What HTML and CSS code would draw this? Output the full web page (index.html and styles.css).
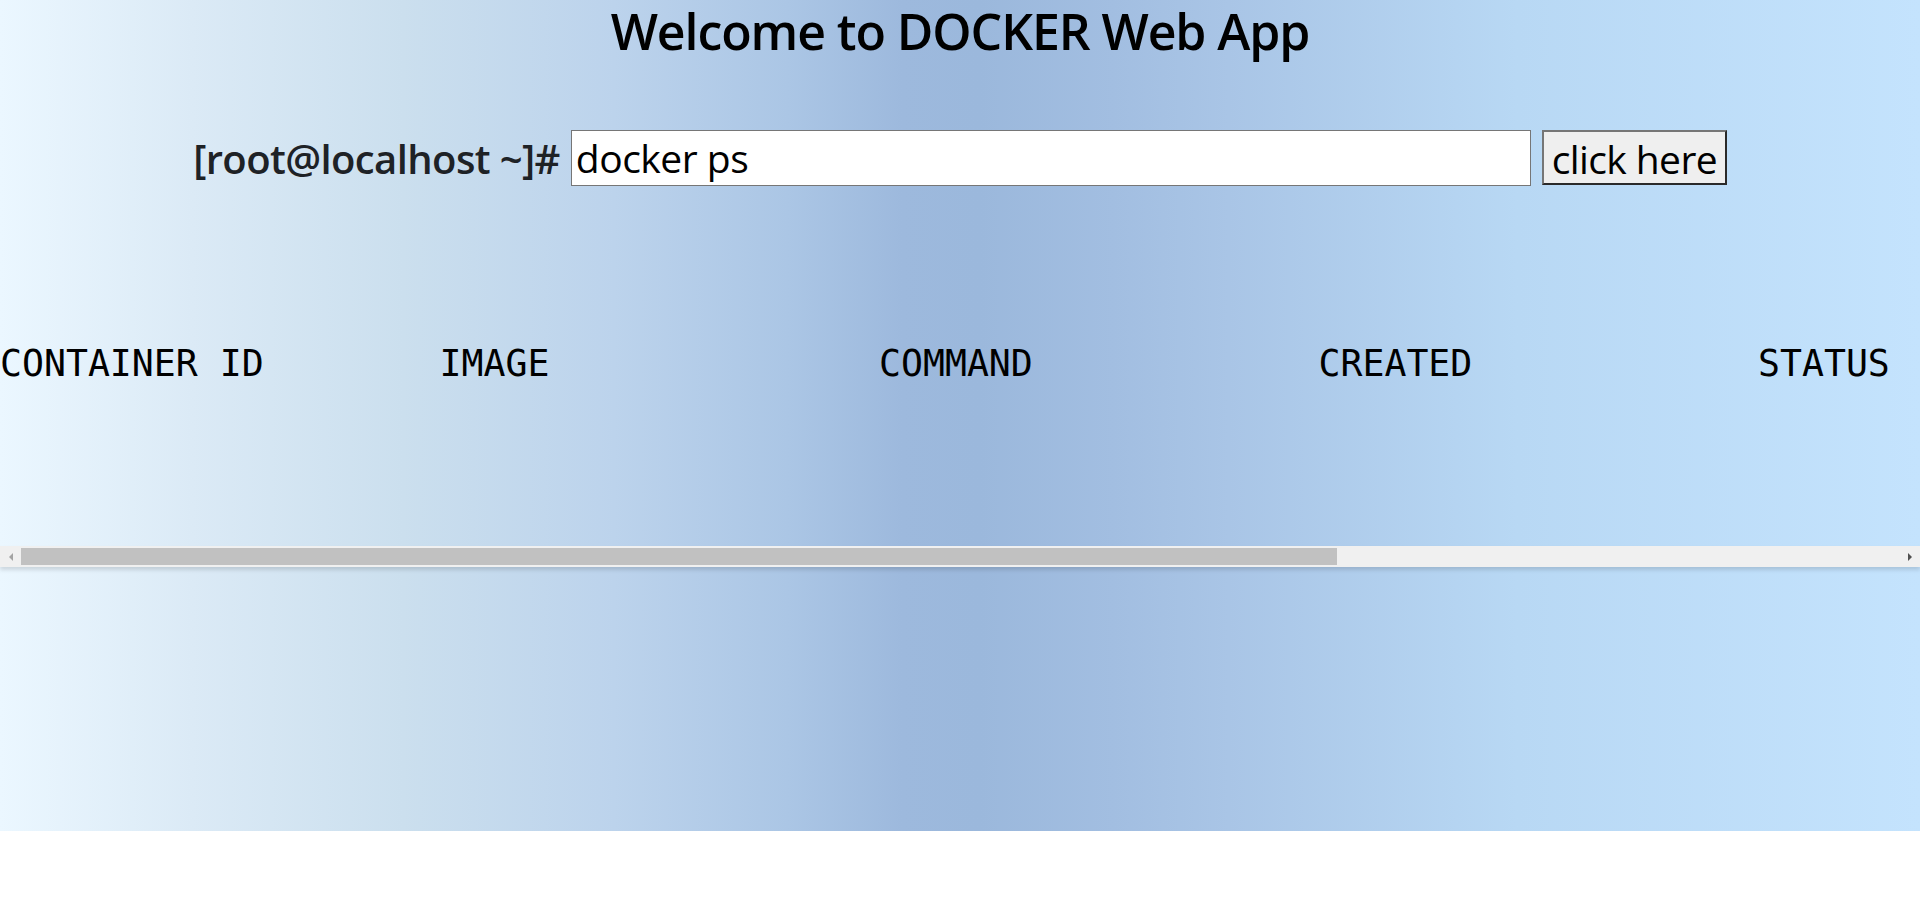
FILE: index.html
```html
<!DOCTYPE html>
<html lang="en">
<head>
<meta charset="utf-8">
<title>DOCKER Web App</title>
<link rel="stylesheet" href="styles.css">
</head>
<body>
<div class="page">
  <h1 class="title">Welcome to DOCKER Web App</h1>
  <form class="cmd-row">
    <label class="prompt" for="cmd">[root@localhost ~]#</label>
    <input class="cmd-input" id="cmd" type="text" value="docker ps">
    <button class="cmd-btn" type="button">click here</button>
  </form>
  <div class="output-box">
    <pre class="output">CONTAINER ID        IMAGE               COMMAND             CREATED             STATUS              PORTS               NAMES</pre>
    <div class="hscroll" aria-hidden="true">
      <span class="sb-btn sb-left"></span>
      <span class="sb-track"><span class="sb-thumb" style="width: 69.9%"></span></span>
      <span class="sb-btn sb-right"></span>
    </div>
  </div>
</div>
</body>
</html>
```

FILE: styles.css
```css
html, body {
  margin: 0;
  padding: 0;
  background: #ffffff;
}

.page {
  min-height: 831px;
  box-sizing: border-box;
  background: linear-gradient(to right,
    #ebf7ff 0%,
    #dbeaf6 10%,
    #cbdfee 21%,
    #bcd3ec 32%,
    #abc6e5 41%,
    #9db9dd 47%,
    #9bb8dc 51%,
    #a2bee1 58%,
    #a9c5e6 64%,
    #b8d8f4 79%,
    #c4e3fd 100%);
  font-family: "Open Sans", "Noto Sans", sans-serif;
  overflow: hidden;
  padding-top: 1px;
}

.title {
  margin: -4px 0 0;
  font-size: 50px;
  line-height: normal;
  font-weight: 600;
  letter-spacing: -1.1px;
  text-align: center;
  color: #000;
}

.cmd-row {
  margin: 65px 0 0;
  display: flex;
  justify-content: center;
  align-items: center;
  gap: 11px;
}

.prompt {
  font-size: 40px;
  font-weight: 600;
  color: #1e2226;
  letter-spacing: -0.6px;
}

.cmd-input {
  box-sizing: border-box;
  width: 960px;
  height: 56px;
  margin: 0;
  padding: 0 4px 2px;
  border: 1px solid #767676;
  background: #fff;
  font-family: "Open Sans", "Noto Sans", sans-serif;
  font-size: 39px;
  color: #000;
  letter-spacing: -0.5px;
  outline: none;
}

.cmd-btn {
  box-sizing: border-box;
  width: 185px;
  height: 55px;
  margin: 0;
  padding: 0 4px 3px;
  border: 2px solid;
  border-color: #767676 #2a2a2a #2a2a2a #767676;
  background: #efefef;
  font-family: "Open Sans", "Noto Sans", sans-serif;
  font-size: 39px;
  color: #000;
  letter-spacing: -0.6px;
  white-space: nowrap;
  align-self: flex-start;
}

.output-box {
  margin-top: 156px;
}

.output {
  margin: 0;
  padding: 0 0 160px;
  font-family: "DejaVu Sans Mono", "Liberation Mono", monospace;
  font-size: 36.5px;
  line-height: 44px;
  color: #000;
  white-space: pre;
  overflow: hidden;
}

.hscroll {
  display: flex;
  height: 21px;
  background: #f0f0f0;
  box-shadow: 0 3px 4px rgba(0, 0, 0, 0.13);
}

.sb-btn {
  flex: 0 0 19px;
  display: flex;
  align-items: center;
  justify-content: center;
}

.sb-btn::before {
  content: "";
  width: 0;
  height: 0;
  border-top: 4px solid transparent;
  border-bottom: 4px solid transparent;
}

.sb-left::before {
  border-right: 4px solid #a3a3a3;
  margin-left: 2px;
}

.sb-right::before {
  border-left: 4px solid #505050;
  margin-right: 1px;
}

.sb-track {
  flex: 1;
  display: flex;
  padding: 2px 0;
  box-sizing: border-box;
}

.sb-thumb {
  display: block;
  height: 100%;
  margin-left: 2px;
  background: #c1c1c1;
}
```
